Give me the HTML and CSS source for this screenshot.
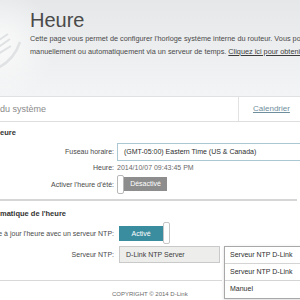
FILE: index.html
```html
<!DOCTYPE html>
<html>
	<head>
		<meta charset="utf-8"/>
		<title>Heure</title>
		<link rel="stylesheet" href="styles.css">
	</head>
	<body>
		<div class="banner">
			<svg class="swoosh" width="30" height="70" viewBox="0 0 30 70">
				<path d="M-14 64 Q12 58 20 34" fill="none" stroke="#e0e2e4" stroke-width="2.5"/>
				<path d="M-4 34 L8 26 M-3 40 L10 31 M-2 46 L11 38" fill="none" stroke="#dfe1e3" stroke-width="2"/>
			</svg>
			<h1>Heure</h1>
			<p class="intro">Cette page vous permet de configurer l'horloge système interne du routeur. Vous pouvez régler l'heure<br>manuellement ou automatiquement via un serveur de temps. <a href="#">Cliquez ici pour obtenir de l'aide</a></p>
		</div>

		<div class="tabs">
			<div class="tab-main">du système</div>
			<div class="tab-side"><a href="#">Calendrier</a></div>
		</div>

		<div class="sec-tit">eure</div>
		<div class="row row-tz">
			<div class="lbl"><span>Fuseau horaire:</span></div>
			<div class="select">(GMT-05:00) Eastern Time (US &amp; Canada)</div>
		</div>
		<div class="row row-time">
			<div class="lbl"><span>Heure:</span></div>
			<div class="val">2014/10/07 09:43:45 PM</div>
		</div>
		<div class="row row-dst">
			<div class="lbl"><span>Activer l'heure d'été:</span></div>
			<div class="toggle off">
				<span class="knob"></span>
				<span class="state">Désactivé</span>
			</div>
		</div>

		<div class="sep"></div>

		<div class="sec-tit sec-ntp">matique de l'heure</div>
		<div class="row row-ntp">
			<div class="lbl"><span>Mettre à jour l'heure avec un serveur NTP:</span></div>
			<div class="toggle on">
				<span class="state">Activé</span>
				<span class="knob"></span>
			</div>
		</div>
		<div class="row row-server">
			<div class="lbl"><span>Serveur NTP:</span></div>
			<div class="server-box">
				<div class="input">D-Link NTP Server</div>
				<ul class="menu">
					<li>Serveur NTP D-Link</li>
					<li>Serveur NTP D-Link</li>
					<li>Manuel</li>
				</ul>
			</div>
		</div>

		<div class="sep sep-foot"></div>
		<div class="footer">COPYRIGHT © 2014 D-Link</div>
	</body>
</html>
```

FILE: styles.css
```css
*{margin:0;padding:0;box-sizing:border-box;list-style-type:none;}
body
{
	width:300px;
	height:300px;
	overflow:hidden;
	background:#fff;
	font-family:"Liberation Sans",Arial,sans-serif;
	font-size:7px;
	color:#3c3c3c;
}
.banner
{
	height:97px;
	padding-left:30px;
	position:relative;
	overflow:hidden;
	background:radial-gradient(circle at 0 45px,#fafafa 0,rgba(250,250,250,0) 55px),linear-gradient(#e5e7e9,#f3f4f5);
	border-bottom:1px solid #dfe1e2;
}
.swoosh
{
	position:absolute;
	left:0;
	top:8px;
}
.banner h1
{
	position:relative;
	margin-top:8px;
	font-size:20px;
	line-height:24px;
	font-weight:normal;
	color:#4a4a4a;
}
.intro
{
	position:relative;
	font-size:7.3px;
	line-height:13px;
	white-space:nowrap;
	color:#4a4a4a;
}
.intro a{color:#3c3c3c;}
.tabs
{
	height:25px;
	display:flex;
	border-bottom:1px solid #dedede;
}
.tab-main
{
	flex:1;
	line-height:24px;
	font-size:9px;
	color:#8a8a8a;
}
.tab-side
{
	width:62px;
	border-left:1px solid #e2e2e2;
	padding-left:14px;
	line-height:24px;
	font-size:8px;
}
.tab-side a{color:#6f8e9c;}
.sec-tit
{
	height:20px;
	line-height:20px;
	padding-top:1px;
	font-size:7.5px;
	font-weight:bold;
	color:#333;
}
.row
{
	display:flex;
	align-items:center;
}
.lbl
{
	width:114px;
	flex:none;
	display:flex;
	justify-content:flex-end;
	white-space:nowrap;
	margin-right:3px;
	color:#4a4a4a;
}
.row-tz{height:19px;}
.select
{
	flex:none;
	width:200px;
	height:18px;
	line-height:16px;
	padding-left:6px;
	border:1px solid #a9c8d3;
	border-right:none;
	color:#2e2e2e;
	white-space:nowrap;
}
.row-time{height:13px;}
.val{color:#6a6a6a;}
.row-dst{height:20px;}
.toggle
{
	display:flex;
	align-items:center;
}
.knob
{
	display:block;
	width:7px;
	height:19px;
	background:#fff;
	border:1px solid #b8b8b8;
	border-radius:2px;
}
.state
{
	display:block;
	height:14px;
	line-height:14px;
	color:#fff;
	text-align:center;
}
.off .state
{
	width:43px;
	background:#8d8d8d;
}
.sep
{
	height:2px;
	width:297px;
	margin:5px 0 4px;
	background:#d6d6d6;
}
.sec-ntp{height:17px;line-height:16px;}
.row-ntp{height:22px;}
.row-ntp .lbl,.row-server .lbl{margin-right:5px;}
.on .state
{
	width:44px;
	height:15px;
	line-height:15px;
	background:#3a8d9f;
}
.on .knob
{
	height:22px;
	border-color:#c6c6c6;
}
.row-server
{
	height:17px;
	margin-top:2px;
}
.server-box
{
	position:relative;
	display:flex;
}
.input
{
	width:101px;
	height:17px;
	line-height:15px;
	padding-left:6px;
	background:#ededeb;
	border:1px solid #c9c9c9;
	color:#3c3c3c;
}
.menu
{
	position:absolute;
	left:105px;
	top:0;
	width:80px;
	background:#fff;
	border:1px solid #a8a8a8;
	box-shadow:0 1px 3px rgba(0,0,0,0.15);
	z-index:2;
}
.menu li
{
	height:17px;
	line-height:16px;
	padding-left:5px;
	border-bottom:1px solid #d4d4d4;
	color:#2e2e2e;
	white-space:nowrap;
}
.menu li:last-child{border-bottom:none;}
.sep-foot
{
	width:222px;
	height:1px;
	margin:17px 0 0;
	background:#d8d8d8;
}
.footer
{
	margin-top:10px;
	padding-left:112px;
	font-size:6px;
	color:#6a6a6a;
	white-space:nowrap;
}
```
